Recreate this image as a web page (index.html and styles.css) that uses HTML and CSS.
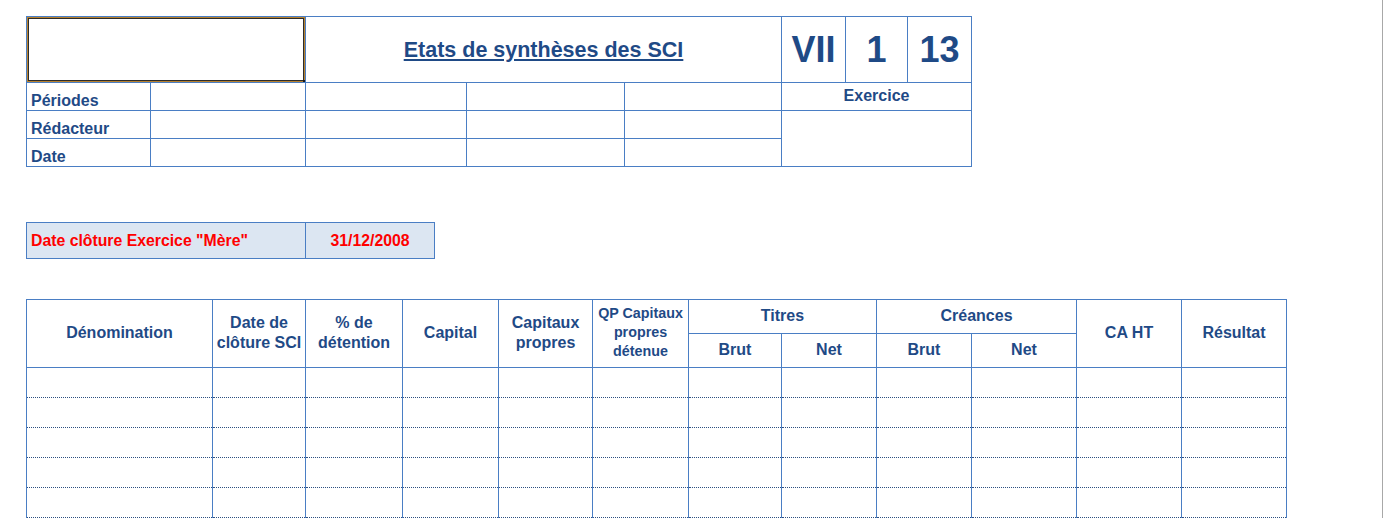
FILE: index.html
```html
<!DOCTYPE html>
<html lang="fr">
<head>
<meta charset="utf-8">
<title>Etats de synthèses des SCI</title>
<link rel="stylesheet" href="styles.css">
</head>
<body>
<div class="sheet">
  <table class="grid head">
    <colgroup>
      <col class="w124"><col class="w155"><col class="w161"><col class="w158"><col class="w157"><col class="w64"><col class="w62"><col class="w64">
    </colgroup>
    <tr class="h66">
      <td colspan="2" class="selected"><span class="sel-box"></span><span class="sel-handle"></span></td>
      <td colspan="3" class="title"><span>Etats de synthèses des SCI</span></td>
      <td class="big">VII</td>
      <td class="big">1</td>
      <td class="big">13</td>
    </tr>
    <tr class="h28">
      <td class="label">Périodes</td><td></td><td></td><td></td><td></td>
      <td colspan="3" class="center exercice">Exercice</td>
    </tr>
    <tr class="h28">
      <td class="label">Rédacteur</td><td></td><td></td><td></td><td></td>
      <td colspan="3" rowspan="2"></td>
    </tr>
    <tr class="h28">
      <td class="label">Date</td><td></td><td></td><td></td><td></td>
    </tr>
  </table>

  <table class="grid cloture">
    <colgroup><col class="w279"><col class="w129"></colgroup>
    <tr class="h36">
      <td class="red left">Date clôture Exercice "Mère"</td>
      <td class="red center">31/12/2008</td>
    </tr>
  </table>

  <table class="grid sci">
    <colgroup>
      <col class="w186"><col class="w93"><col class="w97"><col class="w96"><col class="w94"><col class="w96">
      <col class="w93"><col class="w95"><col class="w95"><col class="w105"><col class="w105"><col class="w105">
    </colgroup>
    <tr class="h34">
      <th rowspan="2">Dénomination</th>
      <th rowspan="2" class="two">Date de<br>clôture SCI</th>
      <th rowspan="2" class="two">% de<br>détention</th>
      <th rowspan="2">Capital</th>
      <th rowspan="2" class="two">Capitaux<br>propres</th>
      <th rowspan="2" class="small">QP Capitaux<br>propres<br>détenue</th>
      <th colspan="2">Titres</th>
      <th colspan="2">Créances</th>
      <th rowspan="2">CA HT</th>
      <th rowspan="2">Résultat</th>
    </tr>
    <tr class="h34">
      <th>Brut</th><th>Net</th><th>Brut</th><th>Net</th>
    </tr>
    <tr class="row"><td></td><td></td><td></td><td></td><td></td><td></td><td></td><td></td><td></td><td></td><td></td><td></td></tr>
    <tr class="row"><td></td><td></td><td></td><td></td><td></td><td></td><td></td><td></td><td></td><td></td><td></td><td></td></tr>
    <tr class="row"><td></td><td></td><td></td><td></td><td></td><td></td><td></td><td></td><td></td><td></td><td></td><td></td></tr>
    <tr class="row"><td></td><td></td><td></td><td></td><td></td><td></td><td></td><td></td><td></td><td></td><td></td><td></td></tr>
    <tr class="row"><td></td><td></td><td></td><td></td><td></td><td></td><td></td><td></td><td></td><td></td><td></td><td></td></tr>
  </table>
</div>
</body>
</html>
```

FILE: styles.css
```css
html, body {
  margin: 0;
  padding: 0;
  background: #ffffff;
}
body {
  font-family: "Liberation Sans", Arial, sans-serif;
  font-weight: bold;
  color: #1f4a86;
  overflow: hidden;
}
.sheet {
  box-sizing: border-box;
  width: 1383px;
  height: 518px;
  border-right: 1px solid #a8a8a8;
  padding: 16px 0 0 26px;
  overflow: hidden;
}
.grid {
  border-collapse: collapse;
  table-layout: fixed;
}
.grid td, .grid th {
  border: 1px solid #4a7ec4;
  padding: 0;
  font-size: 16px;
  line-height: 18px;
  font-weight: bold;
  overflow: hidden;
  white-space: nowrap;
}
.head { width: 946px; }
.cloture { width: 409px; margin-top: 55px; }
.sci { width: 1261px; margin-top: 40px; }

.w124 { width: 124px; } .w155 { width: 155px; } .w161 { width: 161px; }
.w158 { width: 158px; } .w157 { width: 157px; } .w64 { width: 64px; }
.w62 { width: 62px; } .w279 { width: 279px; } .w129 { width: 129px; }
.w186 { width: 186px; } .w93 { width: 93px; } .w97 { width: 97px; }
.w96 { width: 96px; } .w94 { width: 94px; } .w95 { width: 95px; }
.w105 { width: 105px; }

.h66 { height: 66px; }
.h28 { height: 28px; }
.h36 { height: 36px; }
.h34 { height: 34px; }

.selected { position: relative; }
.sel-box {
  position: absolute;
  left: -1px; top: -1px; right: -1px; bottom: -1px;
  border: 1px solid #1a1a1a;
  box-shadow: inset 0 0 0 1px #b9822e, inset 0 0 0 2px #2a2a2a;
}
.sel-handle {
  position: absolute;
  right: -3px; bottom: -3px;
  width: 5px; height: 5px;
  background: #1a1a1a;
}

.grid td.title {
  text-align: center;
  vertical-align: middle;
  font-size: 21.5px;
  line-height: 24px;
}
.title span { text-decoration: underline; text-underline-offset: 2px; }
.grid td.big {
  text-align: center;
  vertical-align: middle;
  font-size: 36px;
  line-height: 40px;
}
.grid td.label {
  vertical-align: bottom;
  padding-left: 4px;
}
.center { text-align: center; vertical-align: middle; }
.grid td.exercice { padding-bottom: 2px; }
.grid td.left { text-align: left; padding-left: 4px; vertical-align: middle; }

.cloture td { background: #dce6f2; }
.grid td.red { color: #ff0000; font-size: 15.8px; }

.sci th {
  text-align: center;
  vertical-align: middle;
  line-height: 20px;
  padding-bottom: 2px;
}
.grid th.small {
  font-size: 14.3px;
  line-height: 19px;
}
.sci .row { height: 30px; }
.sci .row td {
  border-bottom: 1px dotted #2c4f80;
  border-top: 1px dotted #2c4f80;
}
.sci tr.row:first-of-type td { border-top: 1px solid #4a7ec4; }
```
